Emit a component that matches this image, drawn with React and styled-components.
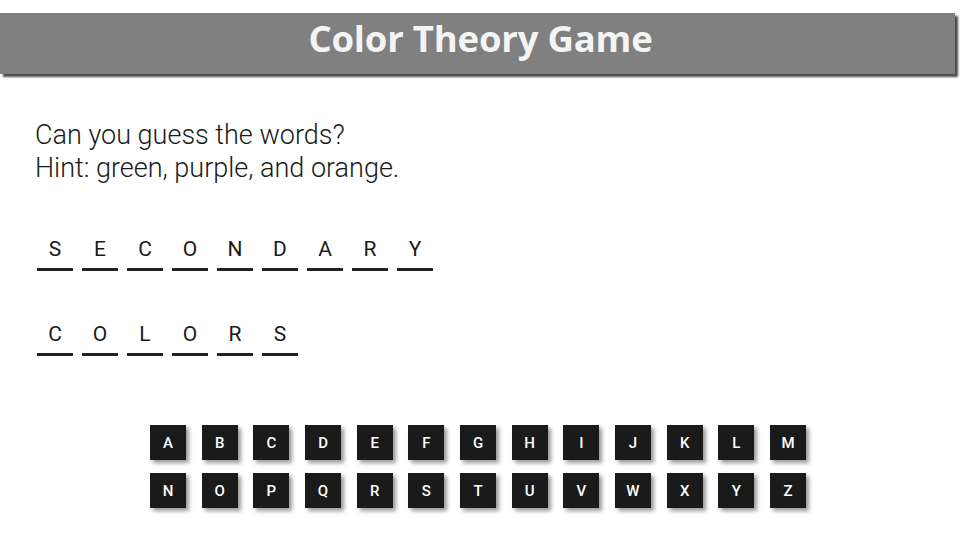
import React from "react";
import styled, { createGlobalStyle } from "styled-components";

const words = ["SECONDARY", "COLORS"];
const rows = ["ABCDEFGHIJKLM", "NOPQRSTUVWXYZ"];

export default function App() {
    return (
        <>
            <GlobalStyle />
            <Page>
                <Header>
                    <Title>Color Theory Game</Title>
                </Header>
                <Main>
                    <Prompt>
                        Can you guess the words?
                        <br />
                        Hint: green, purple, and orange.
                    </Prompt>
                    <Words>
                        {words.map((word) => (
                            <Word key={word}>
                                {word.split("").map((ch, i) => (
                                    <Slot key={i}>{ch}</Slot>
                                ))}
                            </Word>
                        ))}
                    </Words>
                    <Keyboard>
                        {rows.map((row) => (
                            <KeyRow key={row}>
                                {row.split("").map((ch) => (
                                    <Key key={ch}>{ch}</Key>
                                ))}
                            </KeyRow>
                        ))}
                    </Keyboard>
                </Main>
            </Page>
        </>
    );
}

const GlobalStyle = createGlobalStyle`
  html, body {
    margin: 0;
    padding: 0;
    background: #ffffff;
  }
  body {
    font-family: Roboto, "Liberation Sans", sans-serif;
  }
`;

const Page = styled.div`
  width: 960px;
  height: 540px;
  overflow: hidden;
  padding-top: 13px;
  box-sizing: border-box;
`;

const Header = styled.header`
  width: 955px;
  height: 61px;
  background-color: #808080;
  box-shadow: 3px 3px 2px #4a4a4a;
  display: flex;
  align-items: flex-start;
  justify-content: center;
`;

const Title = styled.h1`
  margin: 0;
  font-family: "Open Sans", "Noto Sans", sans-serif;
  font-weight: 700;
  font-size: 36.5px;
  line-height: 50px;
  color: #f4f4f4;
  letter-spacing: -0.2px;
  position: relative;
  left: 3px;
`;

const Main = styled.main`
  padding: 45px 0 0 35px;
`;

const Prompt = styled.p`
  margin: 0;
  font-weight: 300;
  font-size: 27px;
  line-height: 33px;
  color: #1a1a1a;
`;

const Words = styled.div`
  display: flex;
  flex-direction: column;
  gap: 52px;
  margin-top: 53px;
  padding-left: 2px;
`;

const Word = styled.div`
  display: flex;
  gap: 9px;
`;

const Slot = styled.span`
  width: 36px;
  height: 30px;
  border-bottom: 3px solid #222;
  font-size: 21px;
  line-height: 22px;
  text-align: center;
  color: #1a1a1a;
`;

const Keyboard = styled.div`
  display: flex;
  flex-direction: column;
  gap: 13px;
  margin: 69px 0 0 -35px;
`;

const KeyRow = styled.div`
  display: flex;
  justify-content: center;
  gap: 15.67px;
  padding-right: 4px;
`;

const Key = styled.button`
  width: 36px;
  height: 35px;
  padding: 0;
  border: none;
  background-color: #1a1a1a;
  box-shadow: 3px 3px 4px #999;
  color: #ffffff;
  font-family: Roboto, "Liberation Sans", sans-serif;
  font-weight: 500;
  font-size: 15px;
  display: flex;
  align-items: center;
  justify-content: center;
`;
